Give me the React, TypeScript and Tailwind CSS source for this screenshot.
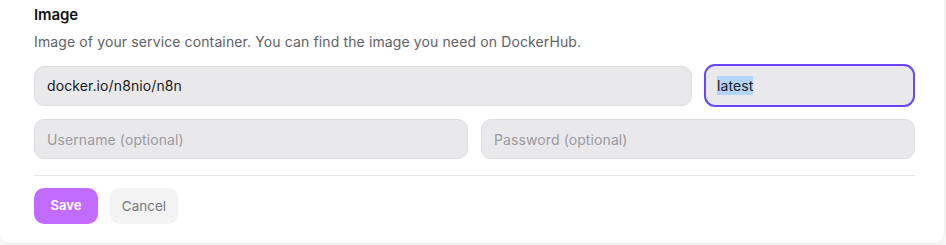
import React from "react";

export default function App() {
  return (
    <div className="w-[946px] h-[245px] bg-[#f7f7f8]" style={{ fontFamily: "Inter, 'Noto Sans', sans-serif" }}>
      <div className="w-[945px] h-[244px] bg-white rounded-b-[10px] border-b border-r border-[#ececee] pl-[34px] pr-[29px] pt-[5px]">
        <div className="text-[15px] font-semibold text-[#111] leading-[20px] tracking-[-0.1px]">Image</div>
        <div className="mt-[8px] text-[14px] tracking-[0.12px] text-[#616166] leading-[18px]">
          Image of your service container. You can find the image you need on DockerHub.
        </div>
        <div className="mt-[13px] flex items-center gap-[12px]">
          <div className="flex-1 h-[40px] rounded-[10px] bg-[#e9e9eb] border border-[#dedee1] flex items-center px-[12px] text-[14px] tracking-[0.1px] text-[#18181b]">
            docker.io/n8nio/n8n
          </div>
          <div className="w-[211px] h-[43px] rounded-[11px] bg-[#e9e9eb] border-2 border-[#6a45ff] flex items-center px-[11px] text-[14px] tracking-[0.1px] text-[#18181b]">
            <span className="bg-[#b3d5fd] leading-[19px]">latest</span>
          </div>
        </div>
        <div className="mt-[12px] flex gap-[13px]">
          <div className="flex-1 h-[40px] rounded-[10px] bg-[#e9e9eb] border border-[#dedee1] flex items-center px-[12px] text-[14px] tracking-[0.1px] text-[#9b9ba1]">
            Username (optional)
          </div>
          <div className="flex-1 h-[40px] rounded-[10px] bg-[#e9e9eb] border border-[#dedee1] flex items-center px-[12px] text-[14px] tracking-[0.1px] text-[#9b9ba1]">
            Password (optional)
          </div>
        </div>
        <div className="mt-[16px] h-px bg-[#e3e3e6]"></div>
        <div className="mt-[12px] flex gap-[12px]">
          <button className="w-[64px] h-[36px] rounded-[10px] bg-[#c26cff] text-white text-[13px] font-semibold">Save</button>
          <button className="w-[68px] h-[36px] rounded-[10px] bg-[#f3f3f4] text-[#77777c] text-[13.5px]">Cancel</button>
        </div>
      </div>
    </div>
  );
}
